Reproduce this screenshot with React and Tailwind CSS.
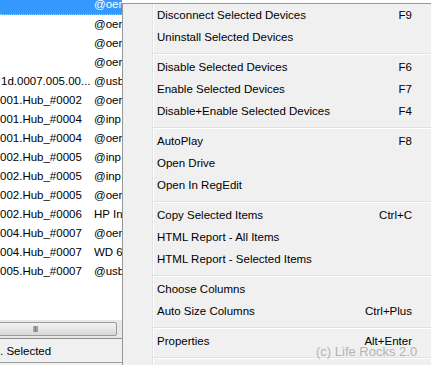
import React from "react";

const rows = [
  { a: "", b: "@oem", selected: true },
  { a: "", b: "@oem" },
  { a: "", b: "@oem" },
  { a: "", b: "@oem" },
  { a: "1d.0007.005.00...", b: "@usb", pad: true },
  { a: "001.Hub_#0002", b: "@oem" },
  { a: "001.Hub_#0004", b: "@inp" },
  { a: "001.Hub_#0004", b: "@oem" },
  { a: "002.Hub_#0005", b: "@inp" },
  { a: "002.Hub_#0005", b: "@inp" },
  { a: "002.Hub_#0005", b: "@oem" },
  { a: "002.Hub_#0006", b: "HP In" },
  { a: "004.Hub_#0007", b: "@oem" },
  { a: "004.Hub_#0007", b: "WD 6" },
  { a: "005.Hub_#0007", b: "@usb" },
];

const menu = [
  [
    ["Disconnect Selected Devices", "F9"],
    ["Uninstall Selected Devices", ""],
  ],
  [
    ["Disable Selected Devices", "F6"],
    ["Enable Selected Devices", "F7"],
    ["Disable+Enable Selected Devices", "F4"],
  ],
  [
    ["AutoPlay", "F8"],
    ["Open Drive", ""],
    ["Open In RegEdit", ""],
  ],
  [
    ["Copy Selected Items", "Ctrl+C"],
    ["HTML Report - All Items", ""],
    ["HTML Report - Selected Items", ""],
  ],
  [
    ["Choose Columns", ""],
    ["Auto Size Columns", "Ctrl+Plus"],
  ],
  [["Properties", "Alt+Enter"]],
];

const Separator = () => (
  <div className="h-[8px] pl-[30px] pt-[4px]">
    <div className="h-px bg-[#e0e0e0]" />
    <div className="h-px bg-white" />
  </div>
);

const App = () => {
  return (
    <div
      className="relative w-[431px] h-[365px] overflow-hidden bg-white text-[11.5px] text-black"
      style={{ fontFamily: '"Liberation Sans", Arial, sans-serif' }}
    >
      {/* list + scrollbar + status */}
      <div className="flex flex-col h-full w-[122px]">
        <div className="h-[320px] overflow-hidden">
          <div className="-mt-[4px]">
            {rows.map((r, i) => (
              <div
                key={i}
                className={`flex items-center h-[19px] whitespace-nowrap ${
                  r.selected ? "bg-[#3399ff] text-white border-b border-dotted border-[#a0c8f0]" : ""
                }`}
              >
                <div className={`w-[94px] overflow-hidden ${r.pad ? "pl-px" : ""}`}>{r.a}</div>
                <div className="flex-1 overflow-hidden">{r.b}</div>
              </div>
            ))}
          </div>
        </div>

        {/* horizontal scrollbar */}
        <div className="h-[18px] bg-[#e8e8e8] flex items-center overflow-hidden">
          <div className="-ml-[47px] w-[164px] h-[14px] rounded-[2px] border border-[#9a9a9a] bg-gradient-to-b from-[#f4f4f4] to-[#d8d8d8] flex items-center justify-center">
            <span className="text-[9px] leading-none text-[#555] tracking-[-1px]">III</span>
          </div>
        </div>

        {/* status bar */}
        <div className="h-[24px] border-t border-[#8e8f8f] bg-[#f0f0f0] flex items-center whitespace-nowrap pt-[3px]">
          . Selected
        </div>
        <div className="flex-1 border-t border-[#a0a0a0] bg-[#f0f0f0]" />
      </div>

      {/* context menu */}
      <div className="absolute left-[122px] top-[3px] w-[320px] h-[400px] bg-[#f0f0f0] border border-[#979797]">
        <div className="absolute left-[29px] top-0 bottom-0 w-px bg-[#e2e3e3]" />
        <div className="absolute left-[30px] top-0 bottom-0 w-px bg-white" />
        <div className="relative pt-px">
          {menu.map((group, gi) => (
            <div key={gi}>
              {gi > 0 && <Separator />}
              {group.map(([label, key]) => (
                <div key={label} className="flex items-center h-[22px] pl-[34px] pr-[29px] whitespace-nowrap">
                  <span className="flex-1">{label}</span>
                  <span>{key}</span>
                </div>
              ))}
            </div>
          ))}
          <Separator />
        </div>
      </div>

      {/* watermark */}
      <div className="absolute left-[316px] top-[345px] text-[13px] leading-none text-[#b4b4b4] whitespace-nowrap">
        (c) Life Rocks 2.0
      </div>
    </div>
  );
};

export default App;
